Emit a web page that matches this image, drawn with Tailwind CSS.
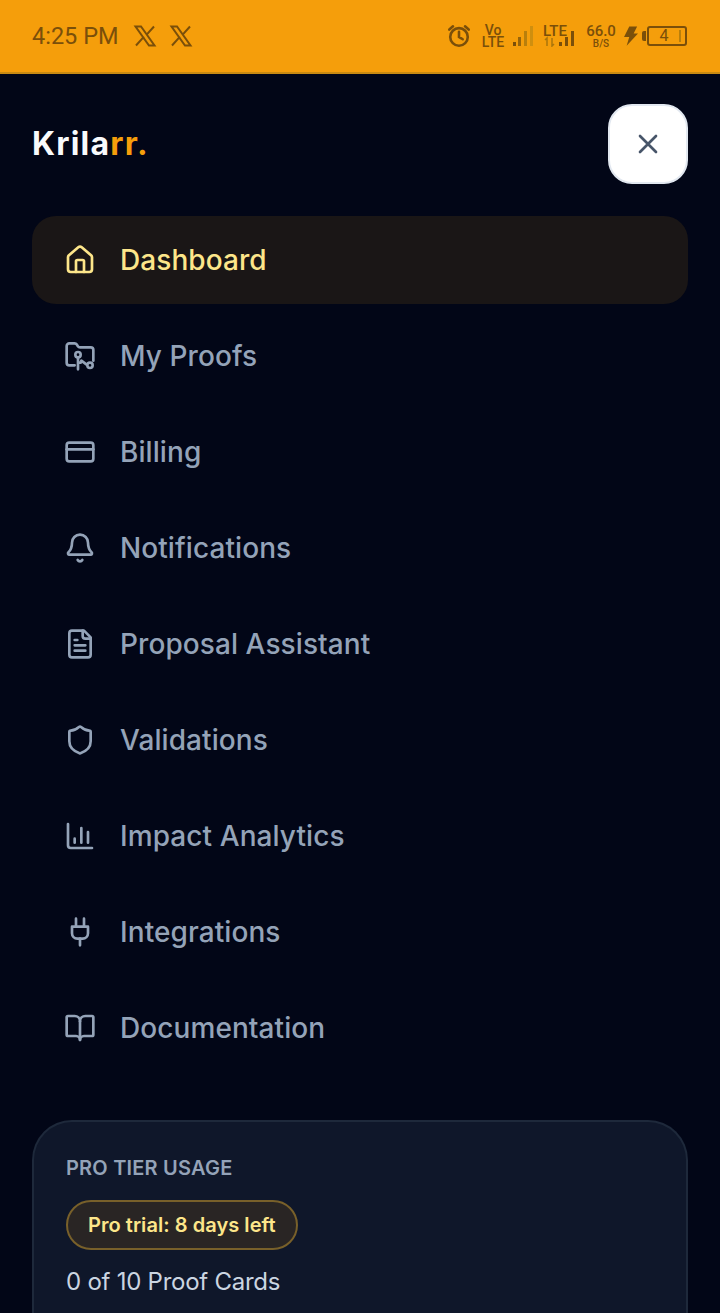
<!DOCTYPE html>
<html lang="en">
<head>
    <meta charset="UTF-8">
    <meta name="viewport" content="width=device-width, initial-scale=1.0">
    <script src="https://cdn.jsdelivr.net/npm/@tailwindcss/browser@4"></script>
    <title>Krilarr menu</title>
</head>
<body class="bg-[#020617] font-['Inter',sans-serif] h-[1313px] overflow-hidden">
    <!-- status bar -->
    <div class="h-[74px] bg-[#f59e0b] border-b-2 border-[#c98a12] flex items-center justify-between pl-[32px] pr-[33px] text-[#7a4f0a]">
        <div class="flex items-center">
            <span class="font-['Roboto',sans-serif] text-[23.5px] w-[98px] pt-[2px]">4:25 PM</span>
            <svg class="ml-[3px]" width="24" height="24" viewBox="0 0 24 24" fill="none" stroke="currentColor" stroke-width="2"><path d="M2.5 2.5h5.5l13.5 19h-5.5zM21 2.5l-7.8 8.6M3 21.5l8-8.8"/></svg>
            <svg class="ml-[12px]" width="24" height="24" viewBox="0 0 24 24" fill="none" stroke="currentColor" stroke-width="2"><path d="M2.5 2.5h5.5l13.5 19h-5.5zM21 2.5l-7.8 8.6M3 21.5l8-8.8"/></svg>
        </div>
        <div class="flex items-center">
            <svg width="24" height="24" viewBox="0 0 26 26" fill="none" stroke="currentColor" stroke-width="2.8" stroke-linecap="round"><circle cx="13" cy="14" r="9.5"/><path d="M13 8.5V14l4 2.5M2.5 6l4-3.5M23.5 6l-4-3.5"/></svg>
            <div class="ml-[12px] w-[20px] flex flex-col items-center font-['Roboto',sans-serif] text-[14px] font-medium leading-[12px]"><span>Vo</span><span>LTE</span></div>
            <svg class="ml-[10px]" width="20" height="20" viewBox="0 0 20 20"><rect x="0" y="16" width="3" height="4" fill="#7a4f0a"/><rect x="5" y="11" width="3" height="9" fill="#96640b"/><rect x="11" y="5" width="3" height="15" fill="#b97f0c"/><rect x="17" y="0" width="3" height="20" fill="#cf8f0f"/></svg>
            <div class="ml-[10px] relative w-[33px] h-[22px] font-['Roboto',sans-serif] text-[15px] font-medium leading-[12px]">LTE<svg class="absolute left-0 top-0" width="33" height="22" viewBox="0 0 33 22"><path d="M4 21v-8l-2 2M9 13v8l2-2" fill="none" stroke="#a9750c" stroke-width="1.5"/><rect x="16" y="17" width="3" height="4" fill="#7a4f0a"/><rect x="22" y="12" width="3" height="9" fill="#7a4f0a"/><rect x="28" y="6" width="3" height="15" fill="#7a4f0a"/></svg></div>
            <div class="ml-[11px] w-[28px] flex flex-col items-center font-['Roboto',sans-serif] font-medium"><span class="text-[15px] leading-[15px]">66.0</span><span class="text-[10px] leading-[10px]">B/S</span></div>
            <svg class="ml-[9px]" width="14" height="22" viewBox="0 0 16 22" fill="#7a4f0a"><path d="M6 0h9l-4 8h5L3 22l3-10H0z"/></svg>
            <div class="ml-[4px] w-[4px] h-[10px] bg-[#7a4f0a] rounded-l-[2px]"></div>
            <div class="ml-[1px] w-[40px] h-[20px] border-2 border-[#7a4f0a] rounded-[3px] flex items-center text-[16px] font-['Roboto',sans-serif] leading-none">
                <span class="w-[30px] text-center">4</span>
                <span class="w-[2px] h-[12px] bg-[#b97f0c]"></span>
            </div>
        </div>
    </div>

    <div class="px-[32px]">
        <!-- logo + close -->
        <div class="h-[110px] pt-[30px] flex items-start justify-between">
            <div class="h-[80px] flex items-center text-[32px] font-bold tracking-[1.2px] text-[#f8fafc]">Krila<span class="text-[#f59e0b]">rr.</span></div>
            <button class="w-[80px] h-[80px] bg-white border-2 border-[#e2e8f0] rounded-[24px] flex items-center justify-center text-[#475569]">
                <svg width="32" height="32" viewBox="0 0 24 24" fill="none" stroke="currentColor" stroke-width="2" stroke-linecap="round"><path d="M18 6 6 18M6 6l12 12"/></svg>
            </button>
        </div>

        <!-- menu -->
        <nav class="mt-[32px] flex flex-col gap-[8px] text-[28px] font-medium tracking-[0.08px] text-[#94a3b8]">
            <a class="h-[88px] rounded-[24px] bg-[#1a1616] text-[#fde68a] flex items-center gap-[24px] px-[32px]">
                <svg width="32" height="32" viewBox="0 0 24 24" fill="none" stroke="currentColor" stroke-width="2" stroke-linecap="round" stroke-linejoin="round"><path d="M15 21v-8a1 1 0 0 0-1-1h-4a1 1 0 0 0-1 1v8"/><path d="M3 10a2 2 0 0 1 .709-1.528l7-5.999a2 2 0 0 1 2.582 0l7 5.999A2 2 0 0 1 21 10v9a2 2 0 0 1-2 2H5a2 2 0 0 1-2-2z"/></svg>
                Dashboard
            </a>
            <a class="h-[88px] flex items-center gap-[24px] px-[32px]">
                <svg width="32" height="32" viewBox="0 0 24 24" fill="none" stroke="currentColor" stroke-width="2" stroke-linecap="round" stroke-linejoin="round"><path d="M8 19H4a2 2 0 0 1-2-2V4.500a2 2 0 0 1 2-2h3.900a2 2 0 0 1 1.690.9l.81 1.200a2 2 0 0 0 1.670.9H20a2 2 0 0 1 2 2v8"/><circle cx="10.500" cy="11" r="2"/><path d="M10.500 13v9M10.500 17l2 0M13 15.500l4 3"/><circle cx="19.500" cy="19" r="2"/></svg>
                My Proofs
            </a>
            <a class="h-[88px] flex items-center gap-[24px] px-[32px]">
                <svg width="32" height="32" viewBox="0 0 24 24" fill="none" stroke="currentColor" stroke-width="2" stroke-linecap="round" stroke-linejoin="round"><rect width="20" height="14" x="2" y="5" rx="2"/><path d="M2 10h20"/></svg>
                Billing
            </a>
            <a class="h-[88px] flex items-center gap-[24px] px-[32px]">
                <svg width="32" height="32" viewBox="0 0 24 24" fill="none" stroke="currentColor" stroke-width="2" stroke-linecap="round" stroke-linejoin="round"><path d="M10.268 21a2 2 0 0 0 3.464 0"/><path d="M3.262 15.326A1 1 0 0 0 4 17h16a1 1 0 0 0 .74-1.673C19.41 13.956 18 12.499 18 8A6 6 0 0 0 6 8c0 4.499-1.411 5.956-2.738 7.326"/></svg>
                Notifications
            </a>
            <a class="h-[88px] flex items-center gap-[24px] px-[32px]">
                <svg width="32" height="32" viewBox="0 0 24 24" fill="none" stroke="currentColor" stroke-width="2" stroke-linecap="round" stroke-linejoin="round"><path d="M15 2H6a2 2 0 0 0-2 2v16a2 2 0 0 0 2 2h12a2 2 0 0 0 2-2V7Z"/><path d="M14 2v4a2 2 0 0 0 2 2h4"/><path d="M10 9H8M16 13H8M16 17H8"/></svg>
                Proposal Assistant
            </a>
            <a class="h-[88px] flex items-center gap-[24px] px-[32px]">
                <svg width="32" height="32" viewBox="0 0 24 24" fill="none" stroke="currentColor" stroke-width="2" stroke-linecap="round" stroke-linejoin="round"><path d="M20 13c0 5-3.500 7.500-7.660 8.950a1 1 0 0 1-.67-.01C7.500 20.500 4 18 4 13V6a1 1 0 0 1 1-1c2 0 4.500-1.200 6.240-2.720a1.170 1.170 0 0 1 1.520 0C14.510 3.810 17 5 19 5a1 1 0 0 1 1 1z"/></svg>
                Validations
            </a>
            <a class="h-[88px] flex items-center gap-[24px] px-[32px]">
                <svg width="32" height="32" viewBox="0 0 24 24" fill="none" stroke="currentColor" stroke-width="2" stroke-linecap="round" stroke-linejoin="round"><path d="M3 3v16a2 2 0 0 0 2 2h16"/><path d="M8 17v-3M13 17V6M18 17V9"/></svg>
                Impact Analytics
            </a>
            <a class="h-[88px] flex items-center gap-[24px] px-[32px]">
                <svg width="32" height="32" viewBox="0 0 24 24" fill="none" stroke="currentColor" stroke-width="2" stroke-linecap="round" stroke-linejoin="round"><path d="M12 22v-5M9 8V2M15 8V2"/><path d="M18 8v5a4 4 0 0 1-4 4h-4a4 4 0 0 1-4-4V8Z"/></svg>
                Integrations
            </a>
            <a class="h-[88px] flex items-center gap-[24px] px-[32px]">
                <svg width="32" height="32" viewBox="0 0 24 24" fill="none" stroke="currentColor" stroke-width="2" stroke-linecap="round" stroke-linejoin="round"><path d="M12 7v14"/><path d="M3 18a1 1 0 0 1-1-1V4a1 1 0 0 1 1-1h5a4 4 0 0 1 4 4 4 4 0 0 1 4-4h5a1 1 0 0 1 1 1v13a1 1 0 0 1-1 1h-6a3 3 0 0 0-3 3 3 3 0 0 0-3-3z"/></svg>
                Documentation
            </a>
        </nav>

        <!-- usage card, cut off by the bottom of the screen -->
        <div class="mt-[48px] h-[193px] bg-[#0f172a] border-2 border-b-0 border-[#1e293b] rounded-t-[40px] pt-[32px] px-[32px]">
            <div class="text-[20px] leading-[28px] font-semibold tracking-[0.2px] text-[#94a3b8]">PRO TIER USAGE</div>
            <div class="mt-[18px] w-fit h-[50px] px-[20px] flex items-center rounded-full border-2 border-[#78602a] bg-[#292524] text-[20px] font-semibold tracking-[0.05px] text-[#fde68a]">Pro trial: 8 days left</div>
            <div class="mt-[16px] text-[24px] leading-[32px] tracking-[-0.25px] text-[#cbd5e1]">0 of 10 Proof Cards</div>
        </div>
    </div>
</body>
</html>
